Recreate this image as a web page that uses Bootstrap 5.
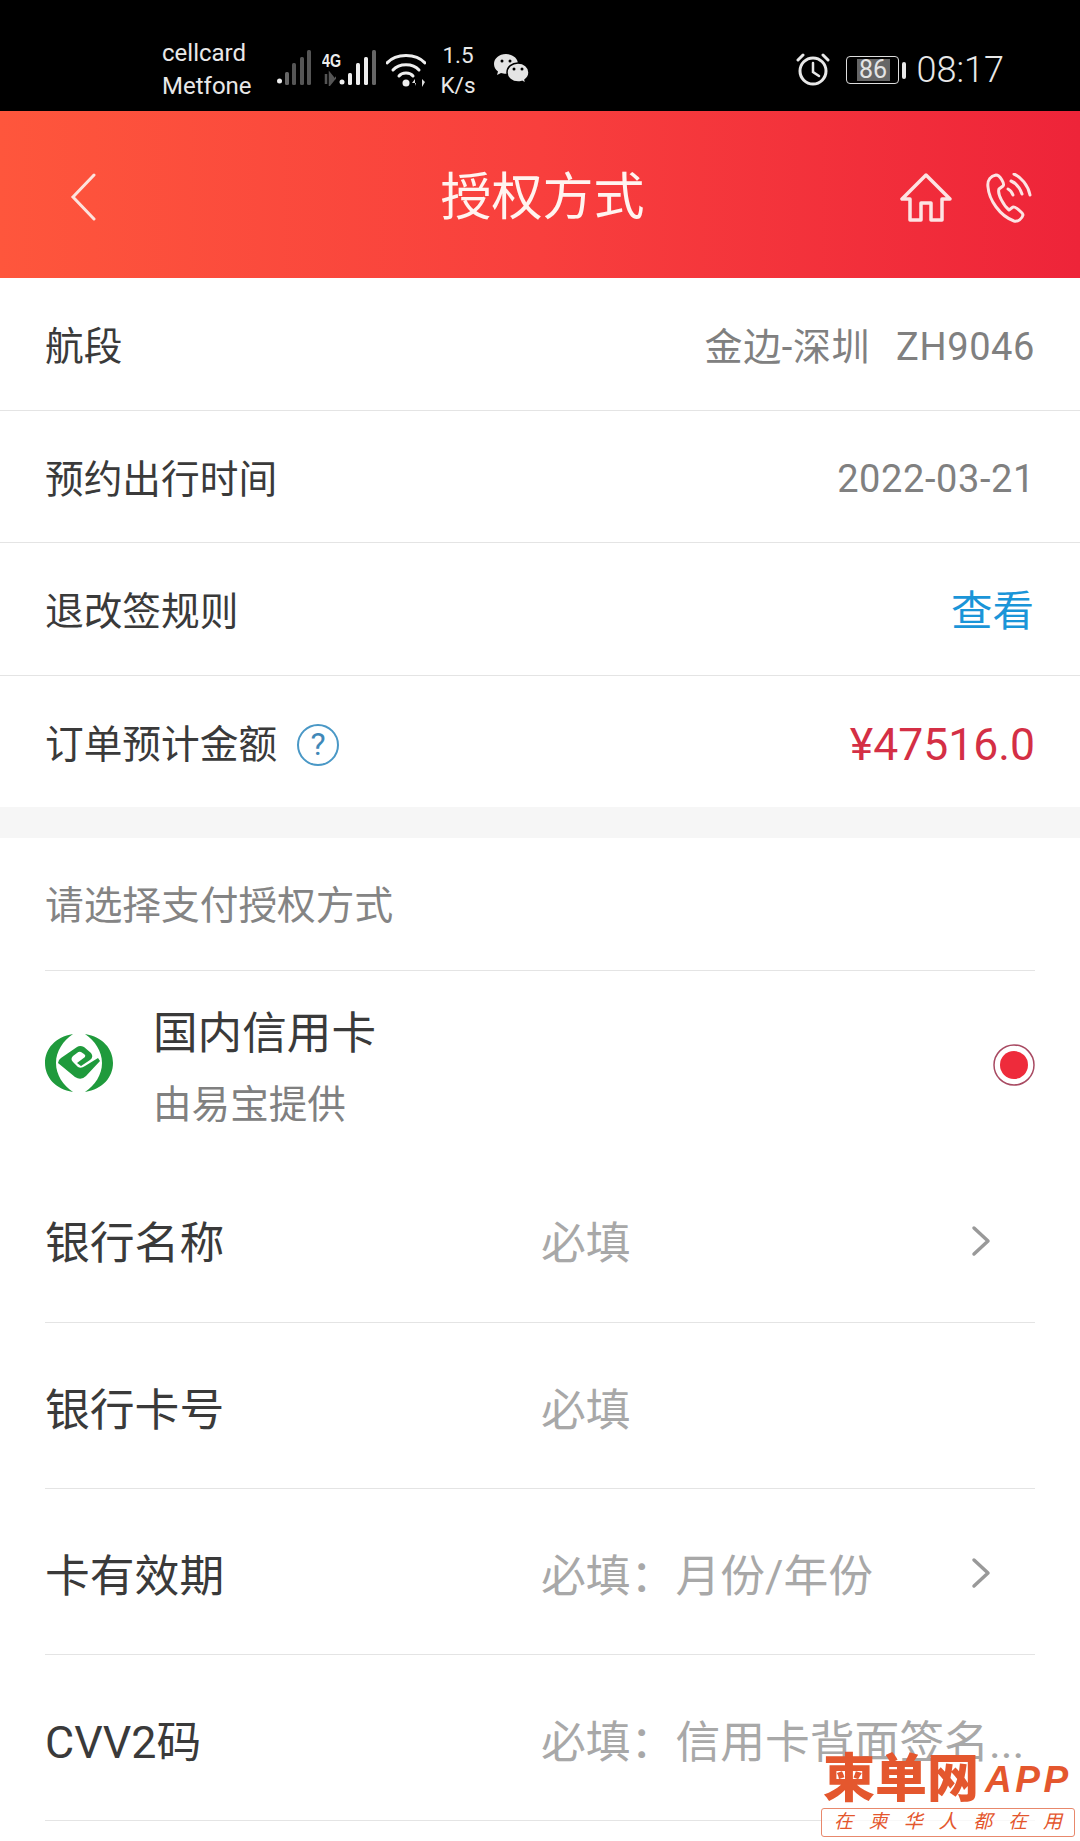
<!DOCTYPE html>
<html lang="zh-CN">
<head>
    <meta charset="UTF-8">
    <meta name="viewport" content="width=device-width, initial-scale=1.0">
    <title>授权方式</title>
    <link href="https://cdn.jsdelivr.net/npm/bootstrap@5.3.2/dist/css/bootstrap.min.css" rel="stylesheet">
    <style>
        html, body { height: 1841px; overflow: hidden; }
        body { font-family: Roboto, "Noto Sans CJK SC", sans-serif; color: #3a3a3a; background: #fff; position: relative; }
        .status-bar { height: 111px; background: #000; color: #e8e8e8; padding: 36px 0 0 162px; line-height: 1; }
        .carrier { width: 115px; font-size: 24px; line-height: 33px; margin-top: 1px; }
        .speed { width: 52px; font-size: 22.500px; line-height: 30px; text-align: center; margin-left: 6px; margin-top: 4px; }
        .clock { font-size: 36px; font-weight: 300; margin-left: 11px; line-height: 36px; }
        .batt { width: 53px; height: 28px; border: 1px solid #ddd; border-radius: 4px; padding: 2px 8px 2px 10px; margin-left: 16px; }
        .batt-fill { background: #666; height: 100%; font-size: 25px; line-height: 22px; text-align: center; color: #e4e4e4; }
        .batt-nub { width: 4px; height: 17px; background: #e8e8e8; border-radius: 2px; margin-left: 3px; }
        .top-bar { height: 167px; background: linear-gradient(90deg, #fe563c, #f83f3d 50%, #ee2439); color: #fff; }
        .top-title { font-size: 51px; left: 5px; right: 0; top: 3px; line-height: 167px; text-align: center; color: #fff4f0; }
        .top-icons { padding-right: 48px; padding-top: 6px; gap: 34px; }
        .back-ico { margin-left: 70px; margin-top: 4px; }
        .info-row { height: 132.6px; padding: 7px 45px 0 45px; font-size: 38.700px; border-bottom: 1px solid #e4e4e4; }
        .info-row.plain { border-bottom: 0; height: 131.2px; }
        .info-val { color: #808080; font-size: 38px; letter-spacing: .6px; }
        .info-val .gap-txt { margin-left: 26px; }
        .link-val { color: #1a95d8; font-size: 41.500px; margin-right: 1px; }
        .money-val { color: #d42f45; font-size: 44.500px; }
        .help-dot { width: 42px; height: 42px; border: 2px solid #4a98c6; border-radius: 50%; color: #3f88b8; font-size: 32px; line-height: 37px; text-align: center; margin-left: 20px; }
        .grey-band { height: 31px; background: #f6f6f6; }
        .pay-box { padding: 0 45px; }
        .pay-title { height: 133px; padding-top: 5px; font-size: 38.700px; color: #848484; border-bottom: 1px solid #e4e4e4; }
        .pay-item { height: 185px; align-items: flex-start; padding-top: 30px; }
        .pay-text { margin-left: 40px; }
        .pay-name { font-size: 44.600px; line-height: 66px; }
        .pay-sub { font-size: 38.600px; line-height: 56px; color: #808080; margin-top: 10px; }
        .pay-logo { margin-top: 32px; }
        .pay-radio { margin-top: 43px; }
        .form-line { height: 166px; padding-top: 10px; border-bottom: 1px solid #e4e4e4; font-size: 44.800px; }
        .form-line.first { height: 167px; }
        .form-label-txt { width: 496px; flex: none; }
        .form-hint { color: #a8a8a8; flex: 1; white-space: nowrap; }
        .form-arrow { margin-right: 44px; margin-top: -6px; flex: none; }
        .stamp { position: absolute; left: 821px; top: 1751px; width: 254px; color: #e4572e; }
        .stamp-top { height: 57px; padding-left: 2px; white-space: nowrap; }
        .stamp-cn { font-size: 52px; font-weight: 900; line-height: 56px; flex: none; }
        .stamp-en { font-family: "Liberation Sans", sans-serif; font-size: 37px; font-weight: 700; font-style: italic; letter-spacing: 3.500px; margin-left: 6px; line-height: 56px; flex: none; }
        .stamp-box { height: 29px; border: 1px solid #e8886c; border-radius: 3px; font-size: 19px; font-style: italic; line-height: 26px; padding: 0 12px; background: rgba(255,255,255,.75); }
    </style>
</head>
<body>
    <div class="status-bar d-flex align-items-start">
        <div class="carrier">cellcard<br>Metfone</div>
        <svg width="34" height="36" viewBox="0 0 34 36" style="margin-top:14px"><circle cx="2.5" cy="31" r="2.5" fill="#eee"/><rect x="8" y="22" width="4" height="13" rx="1.5" fill="#666"/><rect x="15" y="13" width="4" height="22" rx="1.5" fill="#555"/><rect x="23" y="7" width="4" height="28" rx="1.5" fill="#555"/><rect x="30" y="0" width="4" height="35" rx="1.5" fill="#555"/></svg>
        <svg width="54" height="36" viewBox="0 0 54 36" style="margin-left:11px;margin-top:14px"><text x="0" y="17" font-family="Liberation Sans" font-size="19" font-weight="700" fill="#eee" textLength="19" lengthAdjust="spacingAndGlyphs">4G</text><path d="M4 24v10M8 24l4 5-4 5zM13 28h1" stroke="#555" stroke-width="2.5" fill="#555"/><circle cx="20" cy="32" r="2.5" fill="#eee"/><rect x="26" y="23" width="4" height="12" rx="1.5" fill="#eee"/><rect x="34" y="13" width="4" height="22" rx="1.5" fill="#eee"/><rect x="42" y="7" width="4" height="28" rx="1.5" fill="#eee"/><rect x="50" y="0" width="4" height="35" rx="1.5" fill="#666"/></svg>
        <svg width="40" height="36" viewBox="0 0 40 36" style="margin-left:10px;margin-top:16px"><g fill="none" stroke="#eee" stroke-width="3" stroke-linecap="round"><path d="M1 11C10 1 30 1 39 11"/><path d="M7 18C13 11 27 11 33 18"/><path d="M13 24C16 20 24 20 27 24"/></g><circle cx="20" cy="31" r="3.5" fill="#eee"/><path d="M29 34l0-7-3 4h4M36 27v8l3-5z" fill="#ddd"/></svg>
        <div class="speed">1.5<br>K/s</div>
        <svg width="35" height="30" viewBox="0 0 35 30" style="margin-left:10px;margin-top:18px"><path d="M12 0C5 0 0 4.500 0 10c0 3 1.500 5.500 4 7.500L3 21l4-2c1.500.500 3 .8 5 .8C20 20 24 15 24 10 24 4.500 19 0 12 0z" fill="#e4e4e4"/><circle cx="8" cy="7" r="1.500" fill="#000"/><circle cx="16" cy="7" r="1.500" fill="#000"/><path d="M24 9c-6 0-11 4-11 9.500S18 28 24 28c1.500 0 2.500-.2 4-.6l4 2-1-3.500c2.500-2 4-4.500 4-7.500C35 13 30 9 24 9z" fill="#e4e4e4" stroke="#000" stroke-width="1.500"/><circle cx="20" cy="15" r="1.500" fill="#000"/><circle cx="28" cy="15" r="1.500" fill="#000"/></svg>
        <div class="ms-auto d-flex align-items-center" style="padding:16px 76px 0 0">
            <svg width="34" height="34" viewBox="0 0 34 34" style="margin-top:-3px"><circle cx="17" cy="19" r="13" fill="none" stroke="#e8e8e8" stroke-width="3"/><path d="M17 11v9l6 4" fill="none" stroke="#e8e8e8" stroke-width="2.500" stroke-linecap="round"/><path d="M2 8l5-5M32 8l-5-5" stroke="#e8e8e8" stroke-width="3" stroke-linecap="round"/></svg>
            <div class="batt"><div class="batt-fill">86</div></div>
            <div class="batt-nub"></div>
            <div class="clock">08:17</div>
        </div>
    </div>

    <div class="top-bar d-flex align-items-center justify-content-between position-relative">
        <div class="top-title position-absolute">授权方式</div>
        <svg class="back-ico position-relative" width="26" height="48" viewBox="0 0 26 48"><path d="M24 2L3 24l21 22" fill="none" stroke="#fde3dd" stroke-width="3" stroke-linecap="round"/></svg>
        <div class="top-icons d-flex align-items-center position-relative">
            <svg width="52" height="50" viewBox="0 0 52 50"><path d="M26 2L2 26h8v21h11V30h10v17h11V26h8z" fill="none" stroke="#fde3e3" stroke-width="3.500" stroke-linejoin="round"/></svg>
            <svg width="46" height="50" viewBox="0 0 46 50"><g fill="none" stroke="#fde3e3" stroke-linecap="round" stroke-linejoin="round"><path d="M10 2c-5 1-9 5-8 12 1 13 12 29 26 34 4 1 8-2 9-6 0-2-8-9-10-8l-4 3C18 33 11 21 13 16l4-3c2-2-3-11-7-11z" stroke-width="3"/><path d="M22 16c2 1 4 3 5 6" stroke-width="3"/><path d="M25 8c5 2 9 7 11 13" stroke-width="3"/><path d="M28 1c7 3 14 11 16 21" stroke-width="3"/></g></svg>
        </div>
    </div>

    <div class="info-row d-flex align-items-center justify-content-between">
        <span>航段</span>
        <span class="info-val">金边-深圳<span class="gap-txt">ZH9046</span></span>
    </div>
    <div class="info-row d-flex align-items-center justify-content-between">
        <span>预约出行时间</span>
        <span class="info-val">2022-03-21</span>
    </div>
    <div class="info-row d-flex align-items-center justify-content-between">
        <span>退改签规则</span>
        <span class="link-val">查看</span>
    </div>
    <div class="info-row plain d-flex align-items-center justify-content-between">
        <span class="d-flex align-items-center">订单预计金额<span class="help-dot">?</span></span>
        <span class="money-val">¥47516.0</span>
    </div>
    <div class="grey-band"></div>

    <div class="pay-box">
        <div class="pay-title d-flex align-items-center">请选择支付授权方式</div>
        <div class="pay-item d-flex">
            <svg class="pay-logo" width="68" height="60" viewBox="0 0 68 60"><g fill="#1f9a3c"><path d="M28 1C10 4 0 16 0 30s10 26 28 29C18 52 11 42 11 30S18 8 28 1z"/><path d="M40 1C58 4 68 16 68 30S58 56 40 59c10-7 17-17 17-29S50 8 40 1z"/><path d="M13 30Q13 27 16 25L32 14Q35 12 39 14L46 20Q49 24 45 27L36 33 32 30 40 24Q41 22 39 21L36 19Q34 18 32 20L28 23Q25 26 28 29L33 34Q36 36 40 33L53 25 55 28 41 43Q36 48 30 44z"/></g></svg>
            <div class="pay-text flex-grow-1">
                <div class="pay-name">国内信用卡</div>
                <div class="pay-sub">由易宝提供</div>
            </div>
            <svg class="pay-radio" width="42" height="42" viewBox="0 0 42 42"><circle cx="21" cy="21" r="20" fill="#fff" stroke="#a84a62" stroke-width="1.500"/><circle cx="21" cy="21" r="14" fill="#ee2b3b"/></svg>
        </div>
        <div class="form-line first d-flex align-items-center">
            <span class="form-label-txt">银行名称</span>
            <span class="form-hint">必填</span>
            <svg class="form-arrow" width="20" height="32" viewBox="0 0 20 32"><path d="M3 3l14 13L3 29" fill="none" stroke="#999" stroke-width="3.500" stroke-linecap="round" stroke-linejoin="round"/></svg>
        </div>
        <div class="form-line d-flex align-items-center">
            <span class="form-label-txt">银行卡号</span>
            <span class="form-hint">必填</span>
        </div>
        <div class="form-line d-flex align-items-center">
            <span class="form-label-txt">卡有效期</span>
            <span class="form-hint">必填&#xFF1A;月份/年份</span>
            <svg class="form-arrow" width="20" height="32" viewBox="0 0 20 32"><path d="M3 3l14 13L3 29" fill="none" stroke="#999" stroke-width="3.500" stroke-linecap="round" stroke-linejoin="round"/></svg>
        </div>
        <div class="form-line d-flex align-items-center">
            <span class="form-label-txt">CVV2码</span>
            <span class="form-hint">必填&#xFF1A;信用卡背面签名...</span>
        </div>
    </div>

    <div class="stamp">
        <div class="stamp-top d-flex align-items-center">
            <span class="stamp-cn">柬单网</span><span class="stamp-en">APP</span>
        </div>
        <div class="stamp-box d-flex justify-content-between"><span>在</span><span>柬</span><span>华</span><span>人</span><span>都</span><span>在</span><span>用</span></div>
    </div>

    <script src="https://cdn.jsdelivr.net/npm/bootstrap@5.3.2/dist/js/bootstrap.bundle.min.js"></script>
</body>
</html>
